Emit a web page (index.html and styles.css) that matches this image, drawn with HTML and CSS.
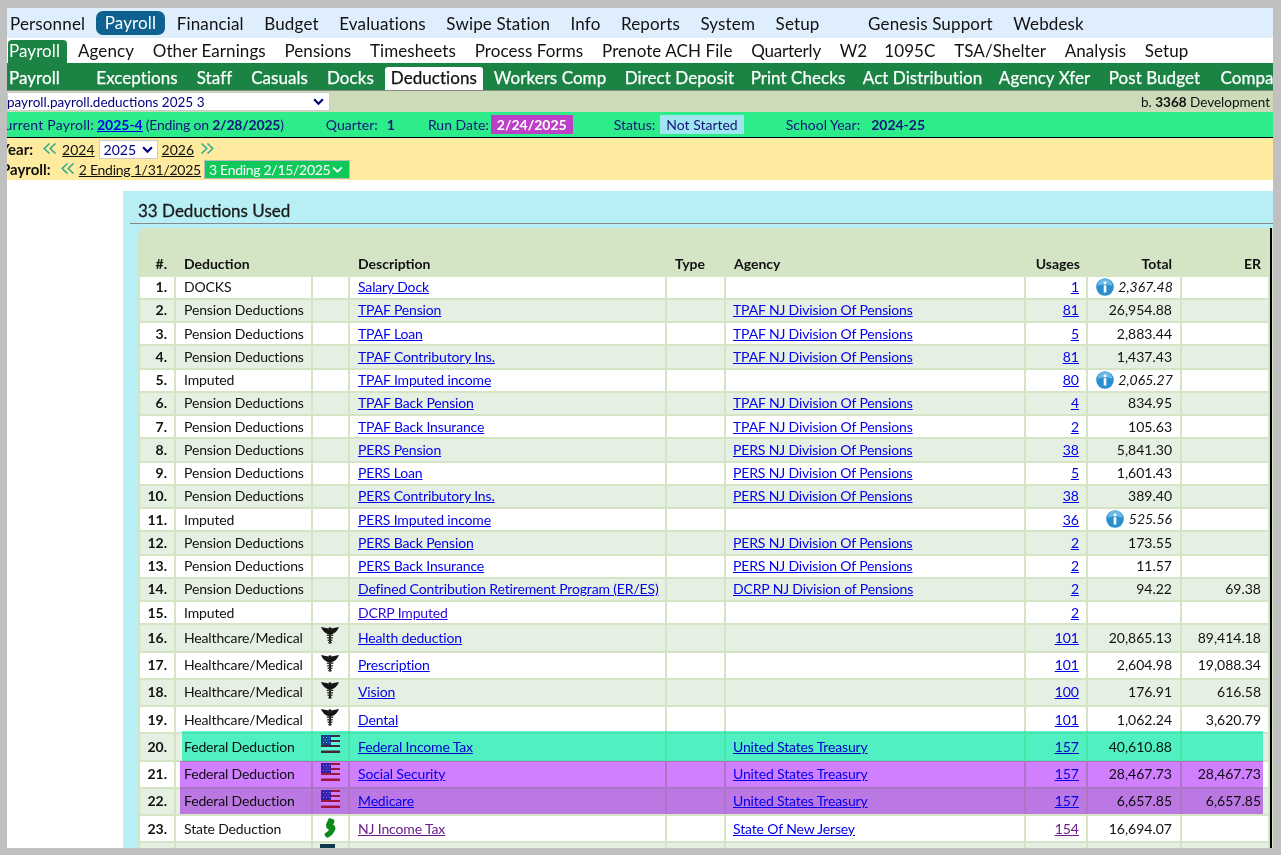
FILE: index.html
```html
<!DOCTYPE html>
<html lang="en">
<head>
<meta charset="utf-8">
<title>Deductions</title>
<link rel="stylesheet" href="styles.css">
</head>
<body>
<svg class="defs" width="0" height="0" aria-hidden="true">
  <defs>
    <symbol id="cad" viewBox="0 0 18 17">
      <path d="M0 0 L7.500 1.500 L8 4 L8 7.500 C4.500 6.500 1.500 4 0 0Z M18 0 L10.500 1.500 L10 4 L10 7.500 C13.500 6.500 16.500 4 18 0Z" fill="#151515"/>
      <circle cx="9" cy="2" r="1.800" fill="#151515"/>
      <rect x="8" y="3" width="2" height="13.500" fill="#151515"/>
      <path d="M5.800 7.500 H12.200 V9 H5.800Z M6.200 10 H11.800 V11.500 H6.200Z M6.600 12.500 H11.400 V14 H6.600Z M7.200 15 H10.800 V16.200 H7.200Z" fill="#383838"/>
    </symbol>
    <symbol id="flag" viewBox="0 0 19 18">
      <rect width="19" height="18" fill="#fff"/>
      <path d="M0 0H19V2H0Z M0 5H19V7H0Z M0 10H19V12H0Z M0 15.500H19V18H0Z" fill="#c4283c"/>
      <rect width="10" height="10" fill="#3d3fa8"/>
      <path d="M2 2h1v1H2Z M5 2h1v1H5Z M8 2h1v1H8Z M3.500 4.500h1v1h-1Z M6.500 4.500h1v1h-1Z M2 7h1v1H2Z M5 7h1v1H5Z M8 7h1v1H8Z" fill="#cfd0f5"/>
    </symbol>
    <symbol id="nj" viewBox="0 0 12 20">
      <path d="M5 0 L10 1.500 L10.500 4 L9 6.500 L11 8 L11.500 11 L10 14 L8 17 L5 19 L3.500 20 L1 18 L0.500 15.500 L3 14 L5 12 L2.500 10 L2 6.500 L3.500 3Z" fill="#0e8a1c"/>
    </symbol>
    <symbol id="info" viewBox="0 0 18 18">
      <circle cx="9" cy="9" r="8.800" fill="#2b8fcf"/>
      <path d="M1.500 8 A7.500 7.500 0 0 1 16.500 8 C12 6 6 6 1.500 8Z" fill="#6bb8e6"/>
      <circle cx="9" cy="4.700" r="1.500" fill="#fff"/>
      <rect x="7.700" y="7.200" width="2.600" height="7.300" fill="#fff"/>
    </symbol>
    <symbol id="dbl-left" viewBox="0 0 14 11">
      <path d="M6.500 0.500 L1.200 5.500 L6.500 10.500 M12.500 0.500 L7.200 5.500 L12.500 10.500" fill="none" stroke="#2aa890" stroke-width="1.500"/>
    </symbol>
    <symbol id="dbl-right" viewBox="0 0 14 11">
      <path d="M1.500 0.500 L6.800 5.500 L1.500 10.500 M7.500 0.500 L12.800 5.500 L7.500 10.500" fill="none" stroke="#2aa890" stroke-width="1.500"/>
    </symbol>
  </defs>
</svg>
<div class="frame">
  <nav class="nav-main">
    <a class="item">Personnel</a>
    <a class="item active">Payroll</a>
    <a class="item">Financial</a>
    <a class="item">Budget</a>
    <a class="item">Evaluations</a>
    <a class="item">Swipe Station</a>
    <a class="item">Info</a>
    <a class="item">Reports</a>
    <a class="item">System</a>
    <a class="item">Setup</a>
    <a class="item far">Genesis Support</a>
    <a class="item">Webdesk</a>
  </nav>
  <nav class="nav-sub">
    <a class="item active">Payroll</a>
    <a class="item">Agency</a>
    <a class="item">Other Earnings</a>
    <a class="item">Pensions</a>
    <a class="item">Timesheets</a>
    <a class="item">Process Forms</a>
    <a class="item">Prenote ACH File</a>
    <a class="item">Quarterly</a>
    <a class="item">W2</a>
    <a class="item">1095C</a>
    <a class="item">TSA/Shelter</a>
    <a class="item">Analysis</a>
    <a class="item">Setup</a>
  </nav>
  <nav class="nav-tabs">
    <a class="item first">Payroll</a>
    <a class="item">Exceptions</a>
    <a class="item">Staff</a>
    <a class="item">Casuals</a>
    <a class="item">Docks</a>
    <a class="item active">Deductions</a>
    <a class="item">Workers Comp</a>
    <a class="item">Direct Deposit</a>
    <a class="item">Print Checks</a>
    <a class="item">Act Distribution</a>
    <a class="item">Agency Xfer</a>
    <a class="item">Post Budget</a>
    <a class="item">Compare</a>
  </nav>
  <div class="context-bar">
    <div class="fake-select context-select"><span>payroll.payroll.deductions 2025 3</span><svg class="chev" viewBox="0 0 10 6"><path d="M1 1l4 4 4-4" fill="none" stroke="#000080" stroke-width="2"/></svg></div>
    <div class="build">b. <b>3368</b> Development</div>
  </div>
  <div class="status-bar">
    <span class="current">Current Payroll:</span> <a class="link pay-link"><b>2025-4</b></a> <span class="ending">(Ending on <b>2/28/2025</b>)</span>
    <span class="quarter">Quarter:</span><b class="quarter-val">1</b>
    <span class="run">Run Date:</span><b class="badge run-badge">2/24/2025</b>
    <span class="stat">Status:</span><span class="badge stat-badge">Not Started</span>
    <span class="school">School Year:</span><b class="school-val">2024-25</b>
  </div>
  <div class="period-bar">
    <div class="period-row">
      <b class="period-label year-label">Year:</b>
      <svg class="arrows"><use href="#dbl-left"/></svg>
      <a class="plain">2024</a>
      <div class="fake-select year-select"><span>2025</span><svg class="chev" viewBox="0 0 10 6"><path d="M1 1l4 4 4-4" fill="none" stroke="#000080" stroke-width="2"/></svg></div>
      <a class="plain">2026</a>
      <svg class="arrows next"><use href="#dbl-right"/></svg>
    </div>
    <div class="period-row">
      <b class="period-label pay-label">Payroll:</b>
      <svg class="arrows"><use href="#dbl-left"/></svg>
      <a class="plain tight">2 Ending 1/31/2025</a>
      <div class="pay-select"><span>3 Ending 2/15/2025</span><svg class="chev" viewBox="0 0 10 6"><path d="M1 1l4 4 4-4" fill="none" stroke="#fff" stroke-width="1.600"/></svg></div>
    </div>
  </div>
  <section class="panel">
    <h2 class="panel-title">33 Deductions Used</h2>
    <div class="table-wrap">
      <table class="grid">
        <colgroup>
          <col class="c-num"><col class="c-ded"><col class="c-ico"><col class="c-desc"><col class="c-type"><col class="c-agency"><col class="c-use"><col class="c-total"><col class="c-er">
        </colgroup>
        <thead>
          <tr><th class="num">#.</th><th>Deduction</th><th></th><th>Description</th><th>Type</th><th>Agency</th><th class="r">Usages</th><th class="r">Total</th><th class="r">ER</th></tr>
        </thead>
        <tbody>
          <tr><td class="num">1.</td><td>DOCKS</td><td></td><td><a class="link">Salary Dock</a></td><td></td><td></td><td class="r"><a class="link">1</a></td><td class="r memo"><svg class="info"><use href="#info"/></svg> 2,367.48</td><td></td></tr>
          <tr><td class="num">2.</td><td>Pension Deductions</td><td></td><td><a class="link">TPAF Pension</a></td><td></td><td><a class="link">TPAF NJ Division Of Pensions</a></td><td class="r"><a class="link">81</a></td><td class="r">26,954.88</td><td></td></tr>
          <tr><td class="num">3.</td><td>Pension Deductions</td><td></td><td><a class="link">TPAF Loan</a></td><td></td><td><a class="link">TPAF NJ Division Of Pensions</a></td><td class="r"><a class="link">5</a></td><td class="r">2,883.44</td><td></td></tr>
          <tr><td class="num">4.</td><td>Pension Deductions</td><td></td><td><a class="link">TPAF Contributory Ins.</a></td><td></td><td><a class="link">TPAF NJ Division Of Pensions</a></td><td class="r"><a class="link">81</a></td><td class="r">1,437.43</td><td></td></tr>
          <tr><td class="num">5.</td><td>Imputed</td><td></td><td><a class="link">TPAF Imputed income</a></td><td></td><td></td><td class="r"><a class="link">80</a></td><td class="r memo"><svg class="info"><use href="#info"/></svg> 2,065.27</td><td></td></tr>
          <tr><td class="num">6.</td><td>Pension Deductions</td><td></td><td><a class="link">TPAF Back Pension</a></td><td></td><td><a class="link">TPAF NJ Division Of Pensions</a></td><td class="r"><a class="link">4</a></td><td class="r">834.95</td><td></td></tr>
          <tr><td class="num">7.</td><td>Pension Deductions</td><td></td><td><a class="link">TPAF Back Insurance</a></td><td></td><td><a class="link">TPAF NJ Division Of Pensions</a></td><td class="r"><a class="link">2</a></td><td class="r">105.63</td><td></td></tr>
          <tr><td class="num">8.</td><td>Pension Deductions</td><td></td><td><a class="link">PERS Pension</a></td><td></td><td><a class="link">PERS NJ Division Of Pensions</a></td><td class="r"><a class="link">38</a></td><td class="r">5,841.30</td><td></td></tr>
          <tr><td class="num">9.</td><td>Pension Deductions</td><td></td><td><a class="link">PERS Loan</a></td><td></td><td><a class="link">PERS NJ Division Of Pensions</a></td><td class="r"><a class="link">5</a></td><td class="r">1,601.43</td><td></td></tr>
          <tr><td class="num">10.</td><td>Pension Deductions</td><td></td><td><a class="link">PERS Contributory Ins.</a></td><td></td><td><a class="link">PERS NJ Division Of Pensions</a></td><td class="r"><a class="link">38</a></td><td class="r">389.40</td><td></td></tr>
          <tr><td class="num">11.</td><td>Imputed</td><td></td><td><a class="link">PERS Imputed income</a></td><td></td><td></td><td class="r"><a class="link">36</a></td><td class="r memo"><svg class="info"><use href="#info"/></svg> 525.56</td><td></td></tr>
          <tr><td class="num">12.</td><td>Pension Deductions</td><td></td><td><a class="link">PERS Back Pension</a></td><td></td><td><a class="link">PERS NJ Division Of Pensions</a></td><td class="r"><a class="link">2</a></td><td class="r">173.55</td><td></td></tr>
          <tr><td class="num">13.</td><td>Pension Deductions</td><td></td><td><a class="link">PERS Back Insurance</a></td><td></td><td><a class="link">PERS NJ Division Of Pensions</a></td><td class="r"><a class="link">2</a></td><td class="r">11.57</td><td></td></tr>
          <tr><td class="num">14.</td><td>Pension Deductions</td><td></td><td><a class="link">Defined Contribution Retirement Program (ER/ES)</a></td><td></td><td><a class="link">DCRP NJ Division of Pensions</a></td><td class="r"><a class="link">2</a></td><td class="r">94.22</td><td class="r">69.38</td></tr>
          <tr><td class="num">15.</td><td>Imputed</td><td></td><td><a class="link fading">DCRP Imputed</a></td><td></td><td></td><td class="r"><a class="link">2</a></td><td></td><td></td></tr>
          <tr class="tall"><td class="num">16.</td><td>Healthcare/Medical</td><td class="ico"><svg class="cad"><use href="#cad"/></svg></td><td><a class="link">Health deduction</a></td><td></td><td></td><td class="r"><a class="link">101</a></td><td class="r">20,865.13</td><td class="r">89,414.18</td></tr>
          <tr class="tall"><td class="num">17.</td><td>Healthcare/Medical</td><td class="ico"><svg class="cad"><use href="#cad"/></svg></td><td><a class="link">Prescription</a></td><td></td><td></td><td class="r"><a class="link">101</a></td><td class="r">2,604.98</td><td class="r">19,088.34</td></tr>
          <tr class="tall"><td class="num">18.</td><td>Healthcare/Medical</td><td class="ico"><svg class="cad"><use href="#cad"/></svg></td><td><a class="link">Vision</a></td><td></td><td></td><td class="r"><a class="link">100</a></td><td class="r">176.91</td><td class="r">616.58</td></tr>
          <tr class="tall"><td class="num">19.</td><td>Healthcare/Medical</td><td class="ico"><svg class="cad"><use href="#cad"/></svg></td><td><a class="link">Dental</a></td><td></td><td></td><td class="r"><a class="link">101</a></td><td class="r">1,062.24</td><td class="r">3,620.79</td></tr>
          <tr class="tall"><td class="num">20.</td><td>Federal Deduction</td><td class="ico"><svg class="flag"><use href="#flag"/></svg></td><td><a class="link">Federal Income Tax</a></td><td></td><td><a class="link">United States Treasury</a></td><td class="r"><a class="link">157</a></td><td class="r">40,610.88</td><td></td></tr>
          <tr class="tall"><td class="num">21.</td><td>Federal Deduction</td><td class="ico"><svg class="flag"><use href="#flag"/></svg></td><td><a class="link">Social Security</a></td><td></td><td><a class="link">United States Treasury</a></td><td class="r"><a class="link">157</a></td><td class="r">28,467.73</td><td class="r">28,467.73</td></tr>
          <tr class="tall"><td class="num">22.</td><td>Federal Deduction</td><td class="ico"><svg class="flag"><use href="#flag"/></svg></td><td><a class="link">Medicare</a></td><td></td><td><a class="link">United States Treasury</a></td><td class="r"><a class="link">157</a></td><td class="r">6,657.85</td><td class="r">6,657.85</td></tr>
          <tr class="tall"><td class="num">23.</td><td>State Deduction</td><td class="ico"><svg class="nj"><use href="#nj"/></svg></td><td><a class="link seen">NJ Income Tax</a></td><td></td><td><a class="link">State Of New Jersey</a></td><td class="r"><a class="link seen">154</a></td><td class="r">16,694.07</td><td></td></tr>
          <tr class="tall"><td></td><td></td><td class="ico"><span class="cut-icon"></span></td><td></td><td></td><td></td><td></td><td></td><td></td></tr>
        </tbody>
      </table>
      <div class="mark teal"></div>
      <div class="mark purple p1"></div>
      <div class="mark purple p2"></div>
    </div>
  </section>
</div>
</body>
</html>
```
FILE: styles.css
```css
* { box-sizing: border-box; }
html, body { height: 100%; }
body {
  margin: 0;
  padding: 8px 8px 7px 7px;
  background: #c0c0c0;
  overflow: hidden;
  font-family: Lato, "Noto Sans", sans-serif;
  font-size: 14px;
  color: #111;
}
.defs { position: absolute; }
.frame { height: 840px; background: #fff; overflow: hidden; }
a { text-decoration: none; color: inherit; }

.nav-main, .nav-sub, .nav-tabs { display: flex; white-space: nowrap; font-size: 17px; }
.nav-main .item, .nav-sub .item, .nav-tabs .item { flex: none; }
.nav-main { height: 30px; background: #deeefc; align-items: center; padding-left: 3px; color: #111; letter-spacing: 0.150px; }
.nav-main .item { margin-right: 20.500px; }
.nav-main .active {
  background: #0f628f; color: #fff; border-radius: 7px;
  padding: 0 9px; height: 24px; line-height: 24px; margin-left: -10px; margin-right: 11.500px;
}
.nav-main .far { margin-left: 28px; }

.nav-sub { height: 25px; background: #fff; align-items: flex-end; padding-left: 1px; letter-spacing: 0.080px; }
.nav-sub .item { height: 23px; line-height: 22px; margin-right: 18.700px; }
.nav-sub .item:nth-child(8) { letter-spacing: -0.200px; }
.nav-sub .item:nth-child(9) { margin-right: 17px; }
.nav-sub .active { background: #1b8344; color: #fff; width: 59px; padding-left: 1px; border-radius: 4px 4px 0 0; margin-right: 11px; }

.nav-tabs { height: 28px; background: #1b8344; color: #fff; border-bottom: 1px solid #888; align-items: flex-end; padding-left: 2px; letter-spacing: 0.050px; -webkit-text-stroke: 0.250px; }
.nav-tabs .item { height: 23px; line-height: 22px; margin-right: 19px; }
.nav-tabs .first { margin-right: 36.500px; }
.nav-tabs .active { background: #fff; color: #111; width: 98px; text-align: center; border-radius: 3px 3px 0 0; margin-left: -8px; margin-right: 11px; }
.nav-tabs .item:nth-child(7) { margin-right: 18.500px; }
.nav-tabs .item:nth-child(8) { margin-right: 16.500px; }
.nav-tabs .item:nth-child(9) { margin-right: 17.500px; }
.nav-tabs .item:nth-child(10) { margin-right: 16.500px; }
.nav-tabs .item:nth-child(11) { margin-right: 18.500px; }
.nav-tabs .item:nth-child(12) { margin-right: 20.500px; }

.context-bar { height: 21px; background: #cddcb8; display: flex; align-items: center; justify-content: space-between; padding-right: 3px; font-size: 13.500px; }
.fake-select { display: flex; align-items: center; justify-content: space-between; background: #fff; border: 1px solid #ccc; color: #000080; flex: none; }
.context-select { width: 323px; height: 19px; padding: 0 5px 0 0; text-indent: -1px; }
.chev { width: 11px; height: 7px; flex: none; }

.status-bar { height: 26px; background: #2ded8a; border-bottom: 1px solid #000; color: #15157a; display: flex; align-items: center; white-space: pre; margin-left: -12px; font-size: 14px; }
.current { letter-spacing: 0.200px; margin-right: 3px; }
.ending { letter-spacing: -0.200px; margin-left: 3px; }
.link { color: #0000ee; text-decoration: underline; }
.link.seen { color: #6a1b8a; }
.link.fading { color: #2a08dc; }
.quarter { margin-left: 42px; }
.quarter-val { margin-left: 9px; }
.run { margin-left: 33px; }
.badge { padding: 0 6px; height: 19px; line-height: 19px; }
.run-badge { background: #bf40c8; color: #fff; margin-left: 2px; }
.stat { margin-left: 41px; }
.stat-badge { background: #9fe6f0; color: #15157a; margin-left: 5px; }
.school { margin-left: 42px; }
.school-val { margin-left: 11px; }

.period-bar { height: 42px; padding-top: 1px; background: #feeb9f; color: #111; font-size: 14px; white-space: nowrap; }
.period-row { display: flex; align-items: center; height: 20px; }
.period-label { font-size: 15px; }
.year-label { margin-left: -7px; }
.pay-label { margin-left: -6px; }
.arrows { width: 14px; height: 11px; flex: none; margin: 0 5px 2px 10px; }
.arrows.next { margin-left: 6px; margin-right: 0; }
.plain { text-decoration: underline; color: #111; }
.plain.tight { letter-spacing: -0.250px; margin-left: -1px; }
.year-select { width: 59px; height: 19px; margin: 0 4px; padding: 0 4px; }
.pay-select { display: flex; flex: none; align-items: center; justify-content: space-between; width: 146px; height: 19px; margin-left: 3px; background: #10c95a; border: 1px solid #bbb; color: #fff; padding: 0 6px 0 4px; letter-spacing: -0.300px; }

.panel { margin: 11px 0 0 116px; background: #b8eff5; }
.panel-title { margin: 0 0 4px 7px; height: 33px; line-height: 40px; padding-left: 8px; font-size: 17px; font-weight: 400; -webkit-text-stroke: 0.300px; border-bottom: 1px solid #888; color: #1a1a1a; }
.table-wrap { position: relative; margin-left: 15px; background: #d4e5c5; border-radius: 8px 0 0 0; height: 640px; overflow: hidden; }

.grid { table-layout: fixed; border-collapse: separate; border-spacing: 2px; width: 1134px; border-right: 2px solid #000; margin: -1px 0 0 0; }
.c-num { width: 34px; } .c-ded { width: 135px; } .c-ico { width: 35px; } .c-desc { width: 315px; } .c-type { width: 57px; }
.c-agency { width: 298px; } .c-use { width: 60px; } .c-total { width: 92px; } .c-er { width: 86px; }
.grid th { height: 46px; vertical-align: bottom; text-align: left; padding: 0 8px 3px; font-size: 14px; font-weight: 700; color: #111; }
.grid td { height: 21.250px; padding: 0 8px 1px; background: #fff; white-space: nowrap; overflow: hidden; line-height: 17px; letter-spacing: -0.150px; }
.grid tbody tr:nth-child(even) td { background: #e6f0e2; }
.grid tbody tr:first-child td { height: 20.750px; }
.grid .tall td { height: 25.250px; }
.grid td.num, .grid th.num { text-align: right; font-weight: 700; padding: 0 7px 1px 0; letter-spacing: 0; }
.grid th.num { padding-bottom: 3px; }
.grid .r { text-align: right; letter-spacing: 0; }
.grid td:nth-child(6) { padding-left: 7px; }
.grid td:nth-child(7) { padding-right: 7px; }
.grid th:nth-child(7) { padding-right: 6px; }
.grid td:nth-child(9), .grid th:nth-child(9) { padding-right: 7px; }
.grid .memo { font-style: italic; }
.grid td.ico { padding: 0; vertical-align: top; text-align: center; }

.info { width: 18px; height: 18px; vertical-align: -4px; margin-right: 1px; }
.cad { width: 18px; height: 17px; display: block; margin: 2px 0 0 8px; }
.flag { width: 19px; height: 18px; display: block; margin: 1px 0 0 8px; }
.nj { width: 12px; height: 20px; display: block; margin: 2px 0 0 11px; }
.cut-icon { display: block; width: 15px; height: 8px; background: #12384f; margin: 1px 0 0 7px; }

.mark { position: absolute; mix-blend-mode: multiply; }
.teal { background: #58ffdb; left: 44px; top: 502.500px; width: 1081px; height: 30px; }
.purple { background: #d080ff; left: 42px; width: 1083px; }
.p1 { top: 533px; height: 26px; }
.p2 { top: 559px; height: 27px; }
```
